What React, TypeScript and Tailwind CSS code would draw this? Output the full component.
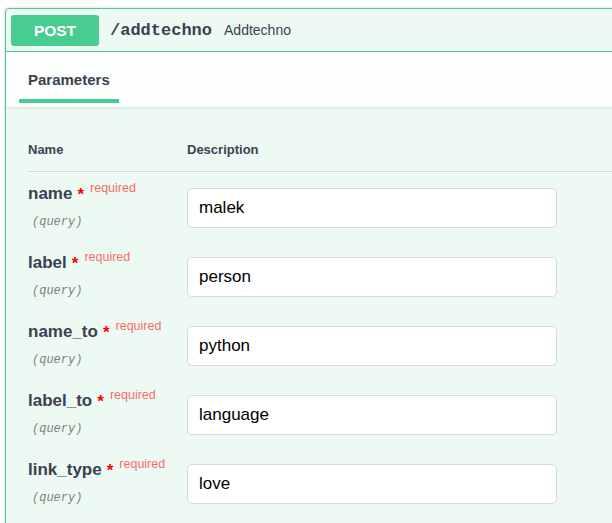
import React from 'react'

const params = [
    { name: "name", value: "malek" },
    { name: "label", value: "person" },
    { name: "name_to", value: "python" },
    { name: "label_to", value: "language" },
    { name: "link_type", value: "love" },
]

const sans = "font-['Liberation_Sans',Arial,sans-serif]"
const mono = "font-['Liberation_Mono','Courier_New',monospace]"

const App = () => {
    return (
        <div className={`w-[612px] h-[523px] overflow-hidden bg-white ${sans} text-[#3b4151]`}>
            <div className="ml-[5px] mt-[8px] w-[660px] rounded-[4px] border border-[#49cc90] bg-[#edfaf4] shadow-[0_0_3px_rgba(0,0,0,0.19)]">

                <div className="flex items-center h-[43px] pt-[1px] px-[5px] border-b border-[#49cc90]">
                    <div className="flex items-center justify-center w-[88px] h-[31px] rounded-[3px] bg-[#49cc90] text-white text-[15.5px] font-bold">
                        POST
                    </div>
                    <span className={`ml-[11px] ${mono} text-[17px] font-bold text-[#3b4151]`}>/addtechno</span>
                    <span className="ml-[12px] text-[14px] text-[#3b4151]">Addtechno</span>
                </div>

                <div className="h-[55px] bg-[#fbfefd] shadow-[0_1px_2px_rgba(0,0,0,0.1)] pl-[13px]">
                    <div className="inline-flex flex-col w-[100px] h-full">
                        <div className="pt-[19px] pl-[9px] text-[15px] font-bold leading-[18px]">Parameters</div>
                        <div className="mt-auto mb-[4px] h-[4px] bg-[#49cc90]"></div>
                    </div>
                </div>

                <div className="pl-[22px] pb-[40px]">
                    <div className="flex pt-[35px] pb-[14px] border-b border-[#d4d8d6] text-[13px] font-bold leading-[15px]">
                        <div className="w-[159px]">Name</div>
                        <div>Description</div>
                    </div>

                    {params.map((p) => (
                        <div key={p.name} className="flex items-start h-[69px]">
                            <div className="w-[159px] pt-[12px]">
                                <div className="flex items-start leading-[20px]">
                                    <span className="text-[17px] font-bold">{p.name}</span>
                                    <span className="ml-[5px] mt-[1px] text-[17px] font-bold text-[#ff0000] leading-[20px]">*</span>
                                    <span className="ml-[6px] -mt-[3px] text-[12.5px] text-[#ff0000]/60 leading-[14px]">required</span>
                                </div>
                                <div className={`mt-[10px] pl-[4px] ${mono} italic text-[12px] leading-[14px] text-[#808080]`}>(query)</div>
                            </div>
                            <div className="pt-[16px]">
                                <div className="flex items-center w-[370px] h-[40px] rounded-[5px] border border-[#d9d9d9] bg-white pl-[11px] text-[17px] text-black">
                                    {p.value}
                                </div>
                            </div>
                        </div>
                    ))}
                </div>

            </div>
        </div>
    )
}

export default App
